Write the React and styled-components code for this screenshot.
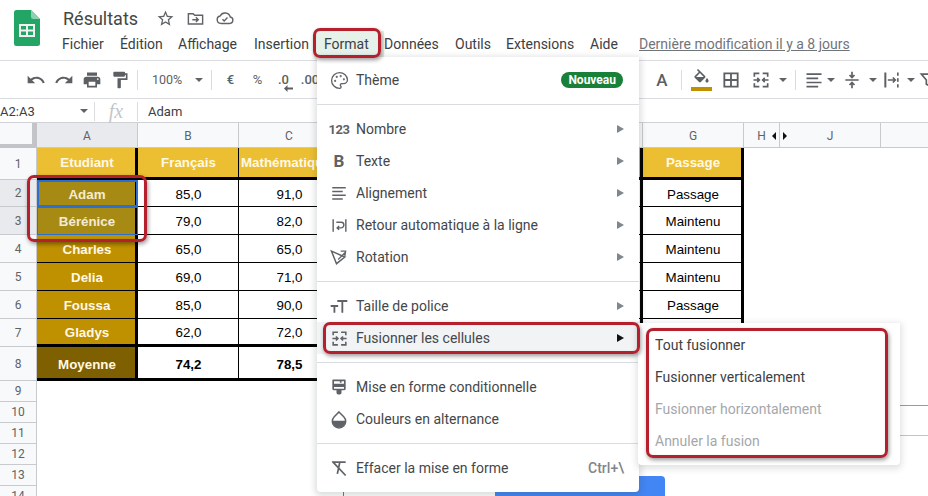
import React from "react";
import styled, { createGlobalStyle } from "styled-components";
import { Palette } from "lucide-react";

const GlobalStyle = createGlobalStyle`
  html, body { margin: 0; padding: 0; background: #fff; }
  * { box-sizing: border-box; }
`;

const Page = styled.div`
  position: relative;
  width: 928px;
  height: 496px;
  overflow: hidden;
  background: #fff;
  font-family: Roboto, "Liberation Sans", sans-serif;
  color: #3c4043;
`;

/* header */
const Header = styled.header`
  display: flex;
  height: 61px;
  padding-left: 14px;
  border-bottom: 1px solid #dadce0;
`;
const LogoBox = styled.div`
  width: 26px;
  margin-top: 10px;
  margin-right: 23px;
`;
const TitleColumn = styled.div`
  display: flex;
  flex-direction: column;
`;
const TitleRow = styled.div`
  display: flex;
  align-items: center;
  height: 24px;
  margin-top: 6px;
  color: #5f6368;
`;
const Title = styled.span`
  font-size: 18px;
  color: #444746;
  width: 87px;
`;
const TitleIcon = styled.span`
  display: flex;
  justify-content: center;
  width: 30px;
`;
const MenuBar = styled.nav`
  display: flex;
  align-items: center;
  height: 28px;
  margin-left: -1px;
`;
const MenuLabel = styled.span`
  font-size: 14px;
  color: #3c4043;
  white-space: nowrap;
  width: ${(p) => p.$w}px;
`;
const LastEdit = styled.span`
  font-size: 14px;
  color: #70757a;
  text-decoration: underline;
  white-space: nowrap;
`;
const ActiveLabel = styled(MenuLabel)`
  background: #e6f1e9;
  margin-left: -10px;
  padding: 5px 0 5px 10px;
`;

/* toolbar */
const Toolbar = styled.div`
  display: flex;
  align-items: center;
  height: 38px;
  border-bottom: 1px solid #dadce0;
  color: #5c5f63;
`;
const ToolGroup = styled.div`
  display: flex;
  align-items: center;
  flex-shrink: 0;
  width: ${(p) => p.$w}px;
  padding-left: ${(p) => p.$pad || 0}px;
`;
const Tool = styled.span`
  display: flex;
  align-items: center;
  justify-content: center;
  flex-shrink: 0;
  position: relative;
  width: ${(p) => p.$w || 28}px;
  height: 24px;
  font-size: ${(p) => p.$size || 12}px;
  font-weight: ${(p) => p.$weight || 400};
`;
const ToolSep = styled.span`
  flex-shrink: 0;
  width: 1px;
  height: 20px;
  background: #dadce0;
  margin-left: ${(p) => p.$left}px;
  margin-right: ${(p) => p.$right}px;
`;
const Caret = styled.span`
  flex-shrink: 0;
  width: 0;
  height: 0;
  border-left: 4px solid transparent;
  border-right: 4px solid transparent;
  border-top: 4px solid #5f6368;
  margin-left: ${(p) => p.$left || 0}px;
  margin-right: ${(p) => p.$right || 0}px;
`;
const FillStack = styled.span`
  display: flex;
  flex-direction: column;
  align-items: center;
`;
const FillBar = styled.span`
  width: 21px;
  height: 4px;
  margin-top: -1px;
  background: #bf9000;
`;
const DecreaseMark = styled.span`
  position: absolute;
  right: 3px;
  bottom: 0;
  display: flex;
`;

/* formula bar */
const FormulaBar = styled.div`
  display: flex;
  align-items: center;
  height: 24px;
  padding-top: 1px;
  border-bottom: 1px solid #cfd1d4;
  font-size: 13px;
  color: #3c4043;
`;
const NameBox = styled.span`
  display: flex;
  align-items: center;
  justify-content: space-between;
  width: 94px;
  padding-right: 6px;
`;
const FxSlot = styled.span`
  width: 44px;
  height: 19px;
  display: flex;
  align-items: center;
  justify-content: center;
  border-left: 1px solid #dadce0;
  border-right: 1px solid #dadce0;
  font-family: "Liberation Serif", serif;
  font-style: italic;
  font-size: 20px;
  color: #c4c6c9;
`;
const FormulaValue = styled.span`
  padding-left: 10px;
`;

/* sheet */
const Sheet = styled.div`
  display: flex;
  flex-direction: column;
`;
const SheetRow = styled.div`
  display: flex;
  height: ${(p) => p.$h}px;
`;
const Corner = styled.div`
  width: 37px;
  flex-shrink: 0;
  background: #f8f9fa;
  border-right: 5px solid #c2c4c7;
  border-bottom: 4px solid #c2c4c7;
`;
const ColHead = styled.div`
  display: flex;
  align-items: center;
  justify-content: center;
  position: relative;
  flex-shrink: 0;
  width: ${(p) => p.$w || 101}px;
  padding-top: 1px;
  background: ${(p) => (p.$active ? "#e8eaed" : "#f8f9fa")};
  border-right: 1px solid #c8cacd;
  border-bottom: 1px solid #c8cacd;
  font-size: 12px;
  color: #5f6368;
`;
const HiddenArrow = styled.span`
  position: absolute;
  top: 9px;
  ${(p) => p.$side}: 3px;
  width: 0;
  height: 0;
  border-top: 4px solid transparent;
  border-bottom: 4px solid transparent;
  border-${(p) => p.$side}: 4px solid #111;
`;
const RowHead = styled.div`
  display: flex;
  align-items: center;
  justify-content: center;
  flex-shrink: 0;
  width: 37px;
  background: ${(p) => (p.$active ? "#e8eaed" : "#f8f9fa")};
  border-right: 1px solid #c8cacd;
  border-bottom: 1px solid #c8cacd;
  font-size: 12px;
  color: #5f6368;
`;

const cellBackground = {
  head: "#ecbf33",
  name: "#bf9000",
  selected: "#a68a14",
  total: "#7f6000",
  value: "#fff",
  strong: "#fff",
};

const Cell = styled.div`
  display: flex;
  align-items: center;
  justify-content: ${(p) => (p.$start ? "flex-start" : "center")};
  padding-left: ${(p) => (p.$start || p.$thickRight ? 2 : 1)}px;
  padding-top: ${(p) => p.$lower || 0}px;
  flex-shrink: 0;
  overflow: hidden;
  white-space: nowrap;
  position: relative;
  width: 101px;
  background: ${(p) => cellBackground[p.$kind]};
  color: ${(p) =>
    p.$kind === "value" || p.$kind === "strong"
      ? "#000"
      : p.$kind === "selected"
        ? "#f3ecd4"
        : "#fff8e6"};
  font-family: "Liberation Sans", Arial, sans-serif;
  font-size: 13.33px;
  font-weight: ${(p) => (p.$kind === "value" ? 400 : 700)};
  border-right: ${(p) => (p.$thickRight ? "3px" : "1px")} solid #000;
  border-bottom: ${(p) => (p.$thickBottom ? "3px" : "1px")} solid #000;
  outline: ${(p) => (p.$focus ? `${p.$focus}px solid #2a6fd6` : "none")};
  outline-offset: -${(p) => p.$focus || 0}px;
`;

/* format menu */
const Menu = styled.div`
  position: absolute;
  left: 317px;
  top: 57px;
  width: 322px;
  height: 435px;
  padding: 7px 0;
  background: #fff;
  border-radius: 0 0 4px 4px;
  box-shadow: 0 2px 6px 2px rgba(60, 64, 67, 0.18);
`;
const MenuRow = styled.div`
  display: flex;
  align-items: center;
  height: 32px;
  padding: 0 15px 0 12px;
  font-size: 14px;
  color: #44474a;
  background: ${(p) => (p.$hover ? "#f1f3f4" : "transparent")};
`;
const RowIcon = styled.span`
  display: flex;
  align-items: center;
  justify-content: center;
  flex-shrink: 0;
  width: 20px;
  margin-right: 7px;
  color: #5f6368;
`;
const RowGlyph = styled(RowIcon)`
  font-weight: 700;
  font-size: ${(p) => p.$size}px;
  letter-spacing: ${(p) => p.$track || 0}px;
`;
const RowLabel = styled.span`
  flex: 1;
`;
const RowArrow = styled.span`
  width: 0;
  height: 0;
  border-top: 4px solid transparent;
  border-bottom: 4px solid transparent;
  border-left: 7px solid ${(p) => (p.$dark ? "#111" : "#80868b")};
`;
const Badge = styled.span`
  padding: 1px 7px;
  border-radius: 8px;
  background: #188038;
  color: #fff;
  font-size: 12px;
  font-weight: 700;
  line-height: 14px;
  margin-right: 1px;
`;
const Shortcut = styled.span`
  color: #80868b;
  font-size: 14px;
  font-weight: 500;
`;
const MenuSep = styled.div`
  height: 1px;
  margin: 8px 0;
  background: #dadce0;
`;

const SubMenu = styled.div`
  position: absolute;
  left: 638px;
  top: 323px;
  width: 262px;
  height: 142px;
  padding: 6px 0;
  background: #fff;
  border-radius: 0 0 4px 4px;
  box-shadow: 0 2px 6px 2px rgba(60, 64, 67, 0.15);
`;
const SubRow = styled.div`
  display: flex;
  align-items: center;
  height: 32px;
  padding-left: 17px;
  font-size: 14px;
  color: ${(p) => (p.$off ? "#a4a7ab" : "#3c4043")};
`;

/* things floating on the sheet, mostly hidden by the menus */
const Floating = styled.div`
  position: absolute;
  left: ${(p) => p.$x}px;
  top: ${(p) => p.$y}px;
  width: ${(p) => p.$w}px;
  height: ${(p) => p.$h}px;
  background: ${(p) => p.$color};
  border-radius: ${(p) => p.$radius || "0"};
`;

const Callout = styled.div`
  position: absolute;
  left: ${(p) => p.$x}px;
  top: ${(p) => p.$y}px;
  width: ${(p) => p.$w}px;
  height: ${(p) => p.$h}px;
  border: 3px solid #b5202e;
  border-radius: 7px;
  box-shadow: 1px 2px 4px rgba(0, 0, 0, 0.4), inset 0 0 1px rgba(0, 0, 0, 0.2);
`;

/* icons */
const Svg = ({ size = 18, children, ...rest }) => (
  <svg width={size} height={size} viewBox="0 0 24 24" fill="currentColor" {...rest}>
    {children}
  </svg>
);
const Lines = ({ size, width = 2, children }) => (
  <Svg size={size} fill="none" stroke="currentColor" strokeWidth={width}>
    {children}
  </Svg>
);

const SheetsLogo = () => (
  <svg width="26" height="36" viewBox="0 0 26 36">
    <path d="M2.5 0H17l9 9v24.5a2.5 2.5 0 0 1-2.5 2.5h-21A2.5 2.5 0 0 1 0 33.5v-31A2.5 2.5 0 0 1 2.5 0z" fill="#23a566" />
    <path d="M17 0l9 9h-6.5A2.5 2.5 0 0 1 17 6.5z" fill="#8ed1b1" />
    <path d="M6 15h14v11H6z" fill="none" stroke="#f1f1f1" strokeWidth="2" />
    <path d="M6 20.5h14M13 15v11" stroke="#f1f1f1" strokeWidth="2" />
  </svg>
);
const StarIcon = () => (
  <Svg size={19}>
    <path d="M22 9.24l-7.19-.62L12 2 9.19 8.63 2 9.24l5.46 4.73L5.82 21 12 17.27 18.18 21l-1.63-7.03L22 9.24zM12 15.4l-3.76 2.27 1-4.28-3.32-2.88 4.38-.38L12 6.1l1.71 4.04 4.38.38-3.32 2.88 1 4.28L12 15.4z" />
  </Svg>
);
const FolderMoveIcon = () => (
  <Lines size={19} width={1.8}>
    <path d="M3 6h6l2 2h10v11H3z" />
    <path d="M8 13.5h7M12.5 10.5l3 3-3 3" />
  </Lines>
);
const CloudIcon = () => (
  <Lines size={20} width={1.7}>
    <path d="M7 18.5a4.5 4.5 0 0 1-.8-8.9A6.5 6.5 0 0 1 18.3 10.8 3.9 3.9 0 0 1 18 18.5z" />
    <path d="M9 13.5l2 2 4-4" />
  </Lines>
);
const UndoIcon = () => (
  <Svg size={20}>
    <path d="M12.5 8c-2.65 0-5.05.99-6.9 2.6L2 7v9h9l-3.62-3.62c1.39-1.16 3.16-1.88 5.12-1.88 3.54 0 6.55 2.31 7.6 5.5l2.37-.78C21.08 11.03 17.15 8 12.5 8z" />
  </Svg>
);
const RedoIcon = () => (
  <Svg size={20}>
    <path d="M18.4 10.6C16.55 8.99 14.15 8 11.5 8c-4.65 0-8.58 3.03-9.96 7.22L3.9 16c1.05-3.19 4.05-5.5 7.6-5.5 1.95 0 3.73.72 5.12 1.88L13 16h9V7l-3.6 3.6z" />
  </Svg>
);
const PrintIcon = () => (
  <Svg size={20}>
    <path d="M19 8H5c-1.66 0-3 1.34-3 3v6h4v4h12v-4h4v-6c0-1.66-1.34-3-3-3zm-3 11H8v-5h8v5zm3-7c-.55 0-1-.45-1-1s.45-1 1-1 1 .45 1 1-.45 1-1 1zm-1-9H6v4h12V3z" />
  </Svg>
);
const PaintIcon = () => (
  <Svg size={20}>
    <path d="M18 4V3c0-.55-.45-1-1-1H5c-.55 0-1 .45-1 1v4c0 .55.45 1 1 1h12c.55 0 1-.45 1-1V6h1v4H9v11c0 .55.45 1 1 1h2c.55 0 1-.45 1-1v-9h8V4h-3z" />
  </Svg>
);
const FillIcon = () => (
  <Svg size={19}>
    <path d="M16.56 8.94L7.62 0 6.21 1.41l2.38 2.38-5.15 5.15c-.59.59-.59 1.54 0 2.12l5.5 5.5c.29.29.68.44 1.06.44s.77-.15 1.06-.44l5.5-5.5c.59-.58.59-1.53 0-2.12zM5.21 10L10 5.21 14.79 10H5.21zM19 11.5s-2 2.17-2 3.5c0 1.1.9 2 2 2s2-.9 2-2c0-1.33-2-3.5-2-3.5z" />
  </Svg>
);
const BordersIcon = () => (
  <Lines size={20} width={2.2}>
    <path d="M4 4h16v16H4zM12 4v16M4 12h16" />
  </Lines>
);
const MergeIcon = ({ size = 20 }) => (
  <Lines size={size} width={2}>
    <path d="M4 8V4h6M14 4h6v4M4 16v4h6M14 20h6v-4" />
    <path d="M3 12h7M7.5 9.500l2.5 2.500-2.500 2.500M21 12h-7M16.5 9.500L14 12l2.5 2.500" />
  </Lines>
);
const AlignIcon = ({ size = 20, width = 2 }) => (
  <Lines size={size} width={width}>
    <path d="M3 5h18M3 10h14M3 15h18M3 20h14" />
  </Lines>
);
const ValignIcon = () => (
  <Lines size={20} width={2}>
    <path d="M4 12h16M12 2v6M9 6l3 3 3-3M12 22v-6M9 18l3-3 3 3" />
  </Lines>
);
const WrapToolIcon = () => (
  <Lines size={20} width={2}>
    <path d="M4 3v18" strokeWidth="2.4" />
    <path d="M7 12h9M13 9l3 3-3 3M19 3v4M19 10v4M19 17v4" />
  </Lines>
);
const FilterIcon = () => (
  <Lines size={20} width={2}>
    <path d="M4 5h16l-6 7v7l-4-2v-5z" />
  </Lines>
);
const DecreaseArrow = () => (
  <svg width="9" height="7" viewBox="0 0 9 7" fill="currentColor">
    <path d="M0 3.5L3.5 0v2.500H9v2H3.500V7z" />
  </svg>
);
const WrapIcon = () => (
  <Lines size={19} width={1.8}>
    <path d="M4 4v16M20 4v16" />
    <path d="M8 8h6a3.5 3.5 0 0 1 0 7H9M11.5 12.5L9 15l2.500 2.500" />
  </Lines>
);
const RotationIcon = () => (
  <Lines size={20} width={1.8}>
    <path d="M3 5l16 7-10 8z" />
    <path d="M14 5l6 0-1 6M20 6l-9 9" strokeWidth="1.5" />
  </Lines>
);
const TextSizeIcon = () => (
  <Lines size={20} width={2.2}>
    <path d="M2 12h9M6.500 12v8M10 6h12M16 6v14" />
  </Lines>
);
const RollerIcon = () => (
  <Svg size={20}>
    <path d="M5 3h14a1 1 0 0 1 1 1v10a2 2 0 0 1-2 2h-3v3a2 2 0 0 1-2 2h-2a2 2 0 0 1-2-2v-3H6a2 2 0 0 1-2-2V4a1 1 0 0 1 1-1zm1 2v3h12V5h-3v2h-2V5zm0 7v2h12v-2z" fillRule="evenodd" />
  </Svg>
);
const DropIcon = () => (
  <Svg size={20}>
    <path d="M12 3.500l5.700 5.700a8 8 0 1 1-11.400 0z" fill="none" stroke="currentColor" strokeWidth="1.800" />
    <path d="M4 14h16a8 8 0 0 1-16 0z" />
  </Svg>
);
const ClearFormatIcon = () => (
  <Lines size={20} width={2.1}>
    <path d="M5 5h15M13 5l-3 14M4 4l16 17" />
  </Lines>
);

const colHeads = ["A", "B", "C", "D", "E", "F", "G"];
const students = [
  { h: 27, name: "Adam", b: "85,0", c: "91,0", g: "Passage", kind: "selected", focus: 2 },
  { h: 28, name: "Bérénice", b: "79,0", c: "82,0", g: "Maintenu", kind: "selected", focus: 1 },
  { h: 28, name: "Charles", b: "65,0", c: "65,0", g: "Maintenu", kind: "name" },
  { h: 28, name: "Delia", b: "69,0", c: "71,0", g: "Maintenu", kind: "name" },
  { h: 28, name: "Foussa", b: "85,0", c: "90,0", g: "Passage", kind: "name" },
  { h: 28, name: "Gladys", b: "62,0", c: "72,0", g: "Passage", kind: "name", before: true },
];
const blankRows = [9, 10, 11, 12, 13, 14];
const headers = ["Etudiant", "Français", "Mathématiques", "", "", "", "Passage"];

export default function App() {
  return (
    <Page>
      <GlobalStyle />
      <Header>
        <LogoBox>
          <SheetsLogo />
        </LogoBox>
        <TitleColumn>
          <TitleRow>
            <Title>Résultats</Title>
            <TitleIcon><StarIcon /></TitleIcon>
            <TitleIcon><FolderMoveIcon /></TitleIcon>
            <TitleIcon><CloudIcon /></TitleIcon>
          </TitleRow>
          <MenuBar>
            <MenuLabel $w={58}>Fichier</MenuLabel>
            <MenuLabel $w={58}>Édition</MenuLabel>
            <MenuLabel $w={76}>Affichage</MenuLabel>
            <MenuLabel $w={70}>Insertion</MenuLabel>
            <ActiveLabel $w={70}>Format</ActiveLabel>
            <MenuLabel $w={71}>Données</MenuLabel>
            <MenuLabel $w={51}>Outils</MenuLabel>
            <MenuLabel $w={84}>Extensions</MenuLabel>
            <MenuLabel $w={49}>Aide</MenuLabel>
            <LastEdit>Dernière modification il y a 8 jours</LastEdit>
          </MenuBar>
        </TitleColumn>
      </Header>

      <Toolbar>
        <ToolGroup $w={648} $pad={22}>
          <Tool><UndoIcon /></Tool>
          <Tool><RedoIcon /></Tool>
          <Tool><PrintIcon /></Tool>
          <Tool><PaintIcon /></Tool>
          <ToolSep $left={3} $right={3} />
          <Tool $w={52} $size={12.5}>100%</Tool>
          <Caret $left={2} />
          <ToolSep $left={8} $right={5} />
          <Tool $w={27} $size={13} $weight={500}>€</Tool>
          <Tool $w={27} $size={13}>%</Tool>
          <Tool $w={25} $size={13} $weight={500}>
            .0<DecreaseMark><DecreaseArrow /></DecreaseMark>
          </Tool>
          <Tool $w={28} $size={13} $weight={500}>.00</Tool>
        </ToolGroup>
        <ToolGroup $w={280}>
          <Tool $size={17} $weight={500}>A</Tool>
          <ToolSep $left={5} $right={5} />
          <Tool $w={28}>
            <FillStack>
              <FillIcon />
              <FillBar />
            </FillStack>
          </Tool>
          <Tool $w={32}><BordersIcon /></Tool>
          <Tool $w={28}><MergeIcon /></Tool>
          <Caret $left={4} />
          <ToolSep $left={8} $right={8} />
          <Tool $w={20}><AlignIcon /></Tool>
          <Caret $left={3} $right={3} />
          <Tool $w={28}><ValignIcon /></Tool>
          <Caret $left={3} $right={3} />
          <Tool $w={24}><WrapToolIcon /></Tool>
          <Caret $left={3} $right={3} />
          <Tool $w={20}><FilterIcon /></Tool>
        </ToolGroup>
      </Toolbar>

      <FormulaBar>
        <NameBox>
          A2:A3
          <Caret />
        </NameBox>
        <FxSlot>fx</FxSlot>
        <FormulaValue>Adam</FormulaValue>
      </FormulaBar>

      <Sheet>
        <SheetRow $h={25}>
          <Corner />
          {colHeads.map((c, i) => (
            <ColHead key={c} $active={i === 0}>{c}</ColHead>
          ))}
          <ColHead $w={36}>H<HiddenArrow $side="right" /></ColHead>
          <ColHead>J<HiddenArrow $side="left" /></ColHead>
          <ColHead $w={60} />
        </SheetRow>

        <SheetRow $h={32}>
          <RowHead>1</RowHead>
          {headers.map((text, i) => (
            <Cell
              key={i}
              $kind="head"
              $start={i === 2}
              $thickRight={i === 0 || i === 5 || i === 6}
              $thickBottom
            >
              {text}
            </Cell>
          ))}
        </SheetRow>

        {students.map((s, i) => (
          <SheetRow key={s.name} $h={s.h}>
            <RowHead $active={i < 2}>{i + 2}</RowHead>
            <Cell $kind={s.kind} $lower={2} $thickRight $thickBottom={s.before} $focus={s.focus}>{s.name}</Cell>
            <Cell $kind="value" $lower={2} $thickBottom={s.before}>{s.b}</Cell>
            <Cell $kind="value" $lower={2} $thickBottom={s.before}>{s.c}</Cell>
            <Cell $kind="value" $thickBottom={s.before} />
            <Cell $kind="value" $thickBottom={s.before} />
            <Cell $kind="value" $thickRight $thickBottom={s.before} />
            <Cell $kind="value" $lower={2} $thickRight $thickBottom={s.before}>{s.g}</Cell>
          </SheetRow>
        ))}

        <SheetRow $h={34}>
          <RowHead>8</RowHead>
          <Cell $kind="total" $lower={4} $thickRight $thickBottom>Moyenne</Cell>
          <Cell $kind="strong" $lower={4} $thickBottom>74,2</Cell>
          <Cell $kind="strong" $lower={4} $thickBottom>78,5</Cell>
        </SheetRow>

        {blankRows.map((n) => (
          <SheetRow key={n} $h={21}>
            <RowHead>{n}</RowHead>
          </SheetRow>
        ))}
      </Sheet>

      <Floating $x={495} $y={476} $w={170} $h={20} $color="#4285f4" $radius="0 4px 0 0" />
      <Floating $x={343} $y={488} $w={1} $h={8} $color="#777" />
      <Floating $x={890} $y={405} $w={38} $h={1} $color="#9a9a9a" />
      <Floating $x={890} $y={435} $w={38} $h={1} $color="#c4c4c4" />

      <Menu>
        <MenuRow>
          <RowIcon><Palette size={19} strokeWidth={1.7} /></RowIcon>
          <RowLabel>Thème</RowLabel>
          <Badge>Nouveau</Badge>
        </MenuRow>
        <MenuSep />
        <MenuRow>
          <RowGlyph $size={13} $track={-0.5}>123</RowGlyph>
          <RowLabel>Nombre</RowLabel>
          <RowArrow />
        </MenuRow>
        <MenuRow>
          <RowGlyph $size={17}>B</RowGlyph>
          <RowLabel>Texte</RowLabel>
          <RowArrow />
        </MenuRow>
        <MenuRow>
          <RowIcon><AlignIcon size={18} width={1.8} /></RowIcon>
          <RowLabel>Alignement</RowLabel>
          <RowArrow />
        </MenuRow>
        <MenuRow>
          <RowIcon><WrapIcon /></RowIcon>
          <RowLabel>Retour automatique à la ligne</RowLabel>
          <RowArrow />
        </MenuRow>
        <MenuRow>
          <RowIcon><RotationIcon /></RowIcon>
          <RowLabel>Rotation</RowLabel>
          <RowArrow />
        </MenuRow>
        <MenuSep />
        <MenuRow>
          <RowIcon><TextSizeIcon /></RowIcon>
          <RowLabel>Taille de police</RowLabel>
          <RowArrow />
        </MenuRow>
        <MenuRow $hover>
          <RowIcon><MergeIcon size={19} /></RowIcon>
          <RowLabel>Fusionner les cellules</RowLabel>
          <RowArrow $dark />
        </MenuRow>
        <MenuSep />
        <MenuRow>
          <RowIcon><RollerIcon /></RowIcon>
          <RowLabel>Mise en forme conditionnelle</RowLabel>
        </MenuRow>
        <MenuRow>
          <RowIcon><DropIcon /></RowIcon>
          <RowLabel>Couleurs en alternance</RowLabel>
        </MenuRow>
        <MenuSep />
        <MenuRow>
          <RowIcon><ClearFormatIcon /></RowIcon>
          <RowLabel>Effacer la mise en forme</RowLabel>
          <Shortcut>Ctrl+\</Shortcut>
        </MenuRow>
      </Menu>

      <SubMenu>
        <SubRow>Tout fusionner</SubRow>
        <SubRow>Fusionner verticalement</SubRow>
        <SubRow $off>Fusionner horizontalement</SubRow>
        <SubRow $off>Annuler la fusion</SubRow>
      </SubMenu>

      <Callout $x={313} $y={28} $w={68} $h={30} />
      <Callout $x={27} $y={175} $w={120} $h={67} />
      <Callout $x={323} $y={322} $w={317} $h={32} />
      <Callout $x={646} $y={328} $w={242} $h={130} />
    </Page>
  );
}
